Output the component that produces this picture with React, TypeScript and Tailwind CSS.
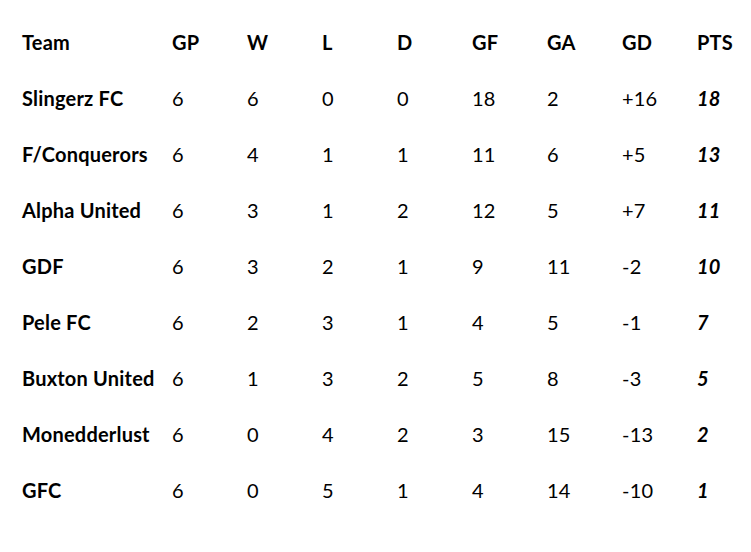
const cols = ["Team", "GP", "W", "L", "D", "GF", "GA", "GD", "PTS"];

const rows: [string, number, number, number, number, number, number, string, number][] = [
  ["Slingerz FC", 6, 6, 0, 0, 18, 2, "+16", 18],
  ["F/Conquerors", 6, 4, 1, 1, 11, 6, "+5", 13],
  ["Alpha United", 6, 3, 1, 2, 12, 5, "+7", 11],
  ["GDF", 6, 3, 2, 1, 9, 11, "-2", 10],
  ["Pele FC", 6, 2, 3, 1, 4, 5, "-1", 7],
  ["Buxton United", 6, 1, 3, 2, 5, 8, "-3", 5],
  ["Monedderlust", 6, 0, 4, 2, 3, 15, "-13", 2],
  ["GFC", 6, 0, 5, 1, 4, 14, "-10", 1],
];

const grid = "grid grid-cols-[150px_75px_75px_75px_75px_75px_75px_75px_1fr] h-[56px] items-center";

export default function App() {
  return (
    <div className="w-[751px] h-[552px] bg-white text-black pl-[22px] pt-[14px] text-[20px] tracking-[0.2px] font-['Lato','Liberation_Sans',sans-serif]">
      <div className={grid + " font-bold"}>
        {cols.map((c) => (
          <div key={c}>{c}</div>
        ))}
      </div>
      {rows.map((r) => (
        <div key={r[0]} className={grid}>
          <div className="font-bold whitespace-nowrap">{r[0]}</div>
          {r.slice(1, 8).map((v, i) => (
            <div key={i}>{v}</div>
          ))}
          <div className="font-bold italic">{r[8]}</div>
        </div>
      ))}
    </div>
  );
}
